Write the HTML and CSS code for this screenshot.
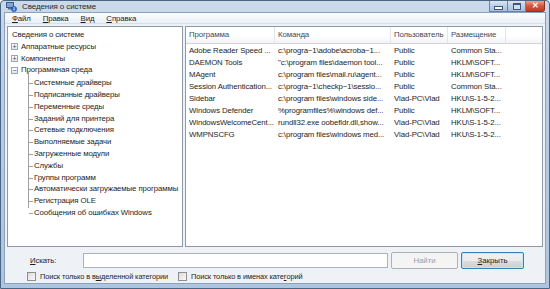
FILE: index.html
```html
<!DOCTYPE html>
<html>
 <head>
  <meta charset="utf-8">
  <title>Сведения о системе</title>
  <link rel="stylesheet" href="styles.css">
 </head>
 <body>
  <div class="window">
   <div class="titlebar">
    <svg class="app_icon" width="11" height="10" viewBox="0 0 11 10">
     <rect x="0.5" y="0.5" width="7" height="5" fill="#7fa6d6" stroke="#3a5f8f"/>
     <rect x="2" y="6" width="4" height="1.5" fill="#55708f"/>
     <circle cx="8" cy="7" r="2.6" fill="#2f6fd0" stroke="#1b4a96" stroke-width="0.6"/>
     <rect x="7.6" y="6.3" width="0.9" height="2.2" fill="#fff"/>
     <rect x="7.6" y="5.1" width="0.9" height="0.8" fill="#fff"/>
    </svg>
    <span class="title">Сведения о системе</span>
    <div class="caption_buttons">
     <div class="cbtn"><span class="min_glyph"></span></div>
     <div class="cbtn"><span class="max_glyph"></span></div>
     <div class="cbtn close"><span class="close_glyph">✕</span></div>
    </div>
   </div>

   <div class="client">
    <div class="menubar">
     <span><u>Ф</u>айл</span>
     <span><u>П</u>равка</span>
     <span><u>В</u>ид</span>
     <span><u>С</u>правка</span>
    </div>

    <div class="panes">
     <div class="tree">
      <div class="node root">Сведения о системе</div>
      <div class="node top"><span class="exp">+</span>Аппаратные ресурсы</div>
      <div class="node top"><span class="exp">+</span>Компоненты</div>
      <div class="node top"><span class="exp">−</span>Программная среда</div>
      <div class="children">
       <div class="node leaf">Системные драйверы</div>
       <div class="node leaf">Подписанные драйверы</div>
       <div class="node leaf">Переменные среды</div>
       <div class="node leaf">Заданий для принтера</div>
       <div class="node leaf">Сетевые подключения</div>
       <div class="node leaf">Выполняемые задачи</div>
       <div class="node leaf">Загруженные модули</div>
       <div class="node leaf">Службы</div>
       <div class="node leaf">Группы программ</div>
       <div class="node leaf selected">Автоматически загружаемые программы</div>
       <div class="node leaf">Регистрация OLE</div>
       <div class="node leaf last">Сообщения об ошибках Windows</div>
      </div>
     </div>

     <div class="list">
      <div class="header">
       <div class="col c1">Программа</div>
       <div class="col c2">Команда</div>
       <div class="col c3">Пользователь</div>
       <div class="col c4">Размещение</div>
       <div class="col filler"></div>
      </div>
      <div class="row"><div class="c1">Adobe Reader Speed ...</div><div class="c2">c:\progra~1\adobe\acroba~1...</div><div class="c3">Public</div><div class="c4">Common Sta...</div></div>
      <div class="row"><div class="c1">DAEMON Tools</div><div class="c2">"c:\program files\daemon tool...</div><div class="c3">Public</div><div class="c4">HKLM\SOFT...</div></div>
      <div class="row"><div class="c1">MAgent</div><div class="c2">c:\program files\mail.ru\agent...</div><div class="c3">Public</div><div class="c4">HKLM\SOFT...</div></div>
      <div class="row"><div class="c1">Session Authentication...</div><div class="c2">c:\progra~1\checkp~1\sessio...</div><div class="c3">Public</div><div class="c4">Common Sta...</div></div>
      <div class="row"><div class="c1">Sidebar</div><div class="c2">c:\program files\windows side...</div><div class="c3">Vlad-PC\Vlad</div><div class="c4">HKU\S-1-5-2...</div></div>
      <div class="row"><div class="c1">Windows Defender</div><div class="c2">%programfiles%\windows def...</div><div class="c3">Public</div><div class="c4">HKLM\SOFT...</div></div>
      <div class="row"><div class="c1">WindowsWelcomeCent...</div><div class="c2">rundll32.exe oobefldr.dll,show...</div><div class="c3">Vlad-PC\Vlad</div><div class="c4">HKU\S-1-5-2...</div></div>
      <div class="row"><div class="c1">WMPNSCFG</div><div class="c2">c:\program files\windows med...</div><div class="c3">Vlad-PC\Vlad</div><div class="c4">HKU\S-1-5-2...</div></div>
     </div>
    </div>

    <div class="search">
     <span class="label"><u>И</u>скать:</span>
     <input class="query" type="text">
     <button class="btn" disabled>Найти</button>
     <button class="btn primary"><u>З</u>акрыть</button>
    </div>

    <div class="options">
     <label><span class="check"></span>Поиск только в в<u>ы</u>деленной категории</label>
     <label><span class="check"></span>Поиск только в именах кате<u>г</u>орий</label>
    </div>
   </div>
  </div>
 </body>
</html>
```

FILE: styles.css
```css
body {
  margin:0;
  font-family:"Liberation Sans", "Noto Sans", sans-serif;
  font-size:7.8px;
  letter-spacing:-0.1px;
  color:#1e1e1e;
}

.window {
  width:550px;
  height:289px;
  box-sizing:border-box;
  border:1px solid #4b6585;
  border-radius:4px 4px 0 0;
  background:linear-gradient(#cbdaeb, #b9cde3 30%, #aec5df);
  display:flex;
  flex-direction:column;
}

.titlebar {
  height:13px;
  display:flex;
  align-items:center;
  padding-left:5px;
}

.app_icon {
  margin-right:5px;
}

.title {
  color:#2a2a2a;
  font-size:8px;
}

.caption_buttons {
  margin-left:auto;
  margin-right:4px;
  align-self:flex-start;
  display:flex;
}

.cbtn {
  width:17px;
  height:10px;
  border:1px solid #6a84a8;
  border-top:none;
  background:linear-gradient(#dbe6f3, #bccfe6 50%, #a9c0dd);
  display:flex;
  align-items:center;
  justify-content:center;
}

.cbtn + .cbtn {
  border-left:none;
}

.cbtn.close {
  width:18px;
  background:linear-gradient(#e9a490, #d5553a 50%, #c23b20);
  border-color:#8a3422;
  border-radius:0 0 3px 0;
}

.min_glyph {
  width:7px;
  height:2px;
  background:#fff;
  border:1px solid #40567a;
  margin-top:3px;
}

.max_glyph {
  width:6px;
  height:4px;
  border:1px solid #40567a;
  border-top-width:2px;
  background:#cfe0f2;
}

.close_glyph {
  color:#fff;
  font-size:8px;
  font-weight:bold;
  line-height:8px;
}

.client {
  flex:1;
  margin:0 3px 4px 3px;
  background:#eef1f5;
  border:1px solid #8aa2bf;
  display:flex;
  flex-direction:column;
}

.menubar {
  height:10px;
  display:flex;
  align-items:center;
  padding-left:7px;
  background:linear-gradient(#fbfcfe, #eaf0f7);
  border-bottom:1px solid #d7dfe9;
  gap:12px;
}

.panes {
  height:221px;
  margin:2px 2px 0 2px;
  display:flex;
  gap:2px;
}

.tree {
  width:176px;
  background:#fff;
  border:1px solid #8e9aa8;
  box-sizing:border-box;
  padding-top:2px;
}

.node {
  height:11.8px;
  line-height:11.8px;
  white-space:nowrap;
  position:relative;
}

.node.root {
  padding-left:4px;
}

.node.top {
  padding-left:13px;
}

.exp {
  position:absolute;
  left:3px;
  top:2.5px;
  width:5px;
  height:5px;
  border:1px solid #98a8b8;
  background:linear-gradient(#fff, #dfe6ee);
  font-size:7px;
  line-height:5px;
  text-align:center;
  color:#3a4a5a;
}

.children {
  margin-left:20px;
  margin-top:1px;
  position:relative;
}

.children:before {
  content:"";
  position:absolute;
  left:0;
  top:-5px;
  height:136px;
  border-left:1px solid #a0a0a0;
}

.node.leaf {
  padding-left:6px;
}

.node.leaf:before {
  content:"";
  position:absolute;
  left:1px;
  top:6px;
  width:4px;
  border-top:1px solid #a0a0a0;
}

.list {
  flex:1;
  background:#fff;
  border:1px solid #8e9aa8;
  box-sizing:border-box;
}

.header {
  display:flex;
  height:16px;
  border-bottom:1px solid #d5d5d5;
  background:linear-gradient(#fff, #fff 55%, #f1f3f6);
  margin-bottom:1px;
}

.col {
  box-sizing:border-box;
  border-right:1px solid #e3e5e8;
  padding-left:3px;
  line-height:16px;
  color:#3c4a5a;
}

.col.filler {
  flex:1;
  border-right:none;
}

.row {
  display:flex;
  height:12px;
  line-height:12px;
  white-space:nowrap;
}

.row div {
  box-sizing:border-box;
  padding-left:3px;
}

.c1 { width:89px; }
.c2 { width:116px; }
.c3 { width:57px; }
.c4 { width:58px; }

.search {
  display:flex;
  align-items:center;
  height:17px;
  margin-top:5px;
  padding-left:25px;
}

.label {
  width:53px;
}

.query {
  width:305px;
  height:15px;
  box-sizing:border-box;
  border:1px solid #abb3bd;
  background:#fff;
  margin:0 3px 0 0;
  padding:0;
}

.btn {
  height:17px;
  box-sizing:border-box;
  font-family:inherit;
  font-size:7.8px;
  border:1px solid #707070;
  border-radius:2px;
  background:linear-gradient(#f2f2f2, #ebebeb 50%, #dddddd 51%, #cfcfcf);
  color:#1e1e1e;
  padding:0;
  margin-right:3px;
  width:67px;
}

.btn[disabled] {
  border-color:#adb2b5;
  background:#f4f4f4;
  color:#a0a0a0;
}

.btn.primary {
  width:63px;
  border-color:#3c7fb1;
  box-shadow:inset 0 0 0 1px #c6e3f7;
}

.options {
  display:flex;
  height:13px;
  align-items:center;
  padding-left:22px;
  gap:10px;
  margin-top:1px;
  font-size:7.4px;
}

.options label {
  display:flex;
  align-items:center;
}

.check {
  width:7px;
  height:7px;
  border:1px solid #8f8f8f;
  background:linear-gradient(135deg, #dcdcdc, #fafafa);
  margin-right:4px;
}
```
